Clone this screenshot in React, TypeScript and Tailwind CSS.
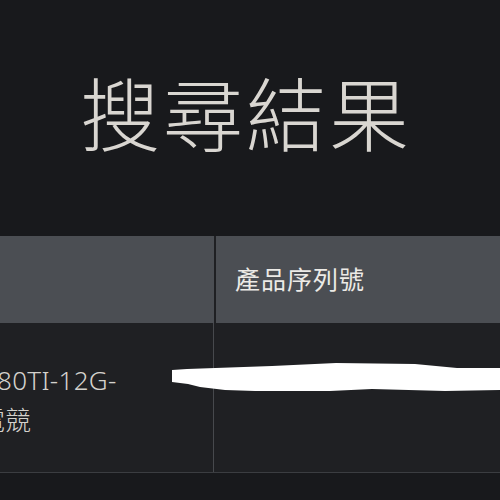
const cjk = { fontFamily: '"Noto Sans", "Noto Sans CJK TC", sans-serif' }

export default function App() {
  return (
    <div className="relative w-[500px] h-[500px] overflow-hidden bg-[#18191c]" style={cjk}>
      <div className="h-[236px] flex items-center justify-center pb-[8px] pr-[8px]">
        <h1 className="text-[80px] leading-none font-light text-[#d9d6d1] tracking-[3px]">搜尋結果</h1>
      </div>

      <div className="flex h-[87px] bg-[#4b4e53]">
        <div className="w-[214px] shrink-0" />
        <div className="w-[2px] shrink-0 bg-[#1f2023]" />
        <div className="flex-1 flex items-center pl-[19px] text-[25px] tracking-[1px] text-[#eceae6]">產品序列號</div>
      </div>

      <div className="flex h-[150px] bg-[#1f2023] border-b border-[#3b3d41]">
        <div className="w-[213px] shrink-0 overflow-hidden pt-[37px] text-[26px] leading-[40px] font-light text-[#d4d2cd]">
          <div className="whitespace-nowrap ml-[-81px] tracking-[0.3px]">GTX1080TI-12G-</div>
          <div className="whitespace-nowrap ml-[-73px]">遊戲電競</div>
        </div>
        <div className="w-px shrink-0 bg-[#47494d]" />
        <div className="flex-1" />
      </div>

      <svg className="absolute left-0 top-0 pointer-events-none" width="500" height="500" viewBox="0 0 500 500">
        <polygon
          fill="#ffffff"
          points="172,370 187,369 272,366 336,363 415,364 457,368 500,368 500,390 445,391 372,389 330,391 255,391 225,390 200,387 188,384 172,382"
        />
      </svg>
    </div>
  )
}
